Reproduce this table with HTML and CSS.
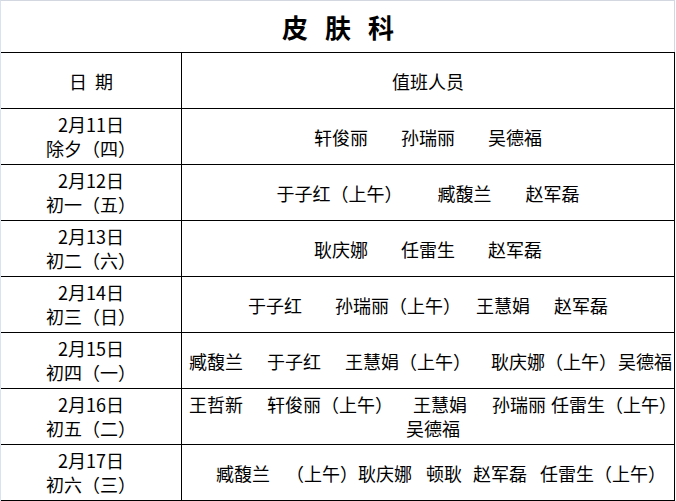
FILE: index.html
```html
<!DOCTYPE html>
<html lang="zh-CN">
<head>
<meta charset="utf-8">
<title>皮肤科</title>
<link rel="stylesheet" href="styles.css">
</head>
<body>
<div class="sheet">
  <div class="title"><span>皮</span><span>肤</span><span>科</span></div>
  <div class="grid">
    <div class="cell date head"><span class="hd1">日</span><span>期</span></div>
    <div class="cell duty head">值班人员</div>

    <div class="cell date"><div>2月11日</div><div>除夕（四）</div></div>
    <div class="cell duty"><div class="line"><span>轩俊丽</span><span class="g33">孙瑞丽</span><span class="g33">吴德福</span></div></div>

    <div class="cell date"><div>2月12日</div><div>初一（五）</div></div>
    <div class="cell duty"><div class="line"><span>于子红（上午）</span><span class="g35">臧馥兰</span><span class="g34">赵军磊</span></div></div>

    <div class="cell date"><div>2月13日</div><div>初二（六）</div></div>
    <div class="cell duty"><div class="line"><span>耿庆娜</span><span class="g33">任雷生</span><span class="g33">赵军磊</span></div></div>

    <div class="cell date"><div>2月14日</div><div>初三（日）</div></div>
    <div class="cell duty"><div class="line"><span>于子红</span><span class="g33">孙瑞丽（上午）</span><span class="g15">王慧娟</span><span class="g24">赵军磊</span></div></div>

    <div class="cell date"><div>2月15日</div><div>初四（一）</div></div>
    <div class="cell duty shift5"><div class="line"><span>臧馥兰</span><span class="g24">于子红</span><span class="g24">王慧娟（上午）</span><span class="g20">耿庆娜（上午）</span><span class="g1">吴德福</span></div></div>

    <div class="cell date"><div>2月16日</div><div>初五（二）</div></div>
    <div class="cell duty two shift10"><div class="line"><span>王哲新</span><span class="g24">轩俊丽（上午）</span><span class="g20">王慧娟</span><span class="g25">孙瑞丽</span><span class="g5">任雷生（上午）</span></div><div class="line">吴德福</div></div>

    <div class="cell date"><div>2月17日</div><div>初六（三）</div></div>
    <div class="cell duty shift26"><div class="line"><span>臧馥兰</span><span class="g16">（上午）</span><span>耿庆娜</span><span class="g14">顿耿</span><span class="g11">赵军磊</span><span class="g13">任雷生（上午）</span></div></div>
  </div>
</div>
</body>
</html>
```

FILE: styles.css
```css
html, body {
  margin: 0;
  padding: 0;
  background: #ffffff;
}

body {
  font-family: "Noto Sans CJK SC", "Noto Sans", sans-serif;
  color: #000000;
  font-size: 18px;
}

.sheet {
  width: 674px;
  border-top: 1px solid #d3d8e0;
  border-left: 1px solid #d9e2ef;
}

.title {
  height: 51px;
  border-right: 1px solid #d3d8e0;
  display: flex;
  justify-content: center;
  align-items: center;
  gap: 17px;
  font-size: 26px;
  font-weight: 700;
  line-height: 30px;
  padding-left: 1px;
}

.grid {
  display: grid;
  grid-template-columns: 181px 492px;
  grid-auto-rows: 56px;
  border-top: 1px solid #000000;
  border-right: 1px solid #000000;
}

.cell {
  border-bottom: 1px solid #000000;
  display: flex;
  flex-direction: column;
  align-items: center;
  justify-content: center;
  line-height: 24px;
  white-space: nowrap;
  min-width: 0;
}

.date {
  border-right: 1px solid #000000;
  padding-bottom: 2px;
}

.head {
  flex-direction: row;
  padding-bottom: 0;
}

.hd1 {
  margin-right: 8px;
}

.duty.two {
  line-height: 24px;
  padding-bottom: 2px;
}

.line {
  display: flex;
  white-space: nowrap;
}

.shift5 { padding-left: 5px; }
.shift10 { padding-left: 10px; }
.shift26 { padding-left: 26px; }

.g1 { margin-left: 1px; }
.g5 { margin-left: 5px; }
.g11 { margin-left: 11px; }
.g13 { margin-left: 13px; }
.g14 { margin-left: 14px; }
.g15 { margin-left: 15px; }
.g16 { margin-left: 16px; }
.g20 { margin-left: 20px; }
.g24 { margin-left: 24px; }
.g25 { margin-left: 25px; }
.g33 { margin-left: 33px; }
.g34 { margin-left: 34px; }
.g35 { margin-left: 35px; }
```
